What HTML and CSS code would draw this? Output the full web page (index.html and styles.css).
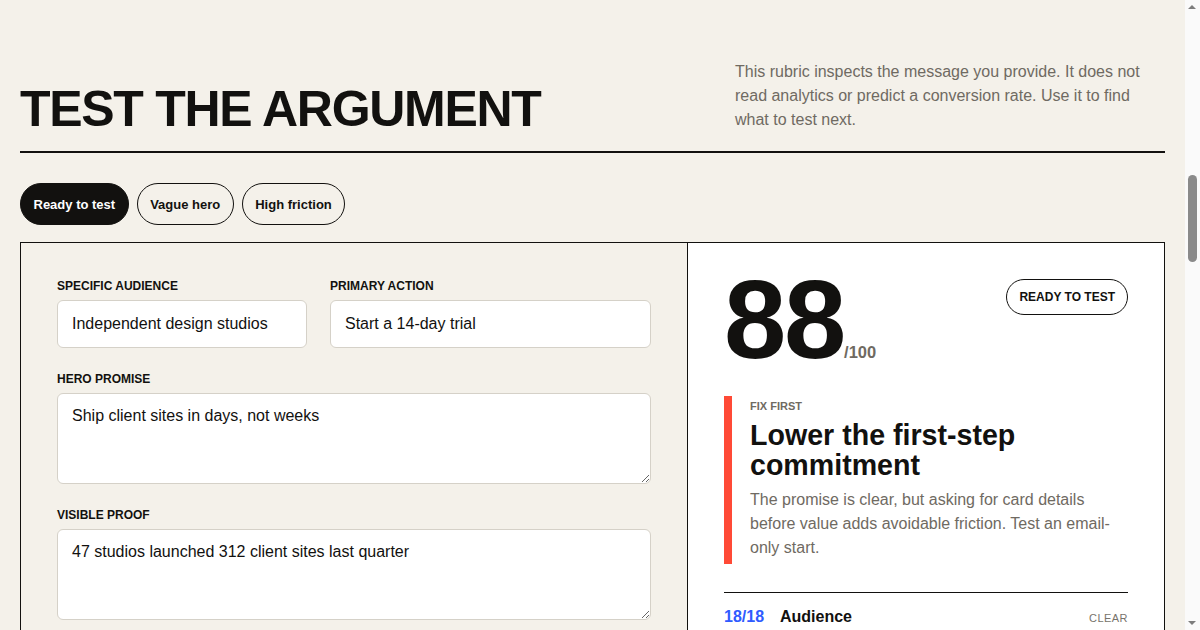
FILE: index.html
```html
<!DOCTYPE html>
<html lang="en">
<head>
    <meta charset="UTF-8">
    <meta name="viewport" content="width=device-width, initial-scale=1.0">
    <title>Test the argument</title>
    <link rel="stylesheet" href="styles.css">
</head>
<body>
    <div class="page">
        <header class="intro">
            <h1>TEST THE ARGUMENT</h1>
            <p>This rubric inspects the message you provide. It does not read analytics or predict a conversion rate. Use it to find what to test next.</p>
        </header>

        <div class="presets">
            <button type="button" class="preset active">Ready to test</button>
            <button type="button" class="preset">Vague hero</button>
            <button type="button" class="preset">High friction</button>
        </div>

        <section class="tester">
            <form class="inputs">
                <div class="row-2">
                    <div class="field">
                        <label for="audience">Specific audience</label>
                        <input type="text" id="audience" value="Independent design studios">
                    </div>
                    <div class="field">
                        <label for="action">Primary action</label>
                        <input type="text" id="action" value="Start a 14-day trial">
                    </div>
                </div>
                <div class="field">
                    <label for="promise">Hero promise</label>
                    <textarea id="promise">Ship client sites in days, not weeks</textarea>
                </div>
                <div class="field">
                    <label for="proof">Visible proof</label>
                    <textarea id="proof">47 studios launched 312 client sites last quarter</textarea>
                </div>
                <div class="field">
                    <label for="friction">First step</label>
                    <textarea id="friction">Card details required before the trial starts</textarea>
                </div>
            </form>

            <div class="report">
                <div class="score-row">
                    <div class="score">88<span>/100</span></div>
                    <div class="verdict">Ready to test</div>
                </div>

                <div class="fix">
                    <div class="fix-label">Fix first</div>
                    <h2>Lower the first-step commitment</h2>
                    <p>The promise is clear, but asking for card details before value adds avoidable friction. Test an email-only start.</p>
                </div>

                <ul class="checks">
                    <li><span class="pts">18/18</span><span class="name">Audience</span><span class="state">Clear</span></li>
                    <li><span class="pts">20/22</span><span class="name">Promise</span><span class="state">Clear</span></li>
                    <li><span class="pts">18/20</span><span class="name">Proof</span><span class="state">Clear</span></li>
                    <li><span class="pts">17/18</span><span class="name">Action</span><span class="state">Clear</span></li>
                    <li><span class="pts">15/22</span><span class="name">Friction</span><span class="state">Weak</span></li>
                </ul>
            </div>
        </section>
    </div>

    <!-- classic scrollbar gutter, drawn by hand -->
    <div class="gutter" aria-hidden="true">
        <span class="arrow up"></span>
        <span class="thumb"></span>
        <span class="arrow down"></span>
    </div>
</body>
</html>
```

FILE: styles.css
```css
body {
    margin: 0 15px 0 0;
    background: #f4f1ea;
    color: #12110f;
    font-family: "Liberation Sans", Arial, sans-serif;
}
.page {
    padding: 0 20px 80px;
}
.intro {
    display: grid;
    grid-template-columns: 1fr 430px;
    align-items: end;
    padding: 60px 0 17px;
    border-bottom: 2px solid #12110f;
}
.intro h1 {
    margin: 0;
    font-size: 50px;
    line-height: 1;
    letter-spacing: -0.026em;
}
.intro p {
    margin: 0 0 2px;
    font-size: 16px;
    line-height: 24px;
    color: #6f6a62;
}
.presets {
    display: flex;
    gap: 8px;
    margin: 30px 0 17px;
}
.preset {
    height: 42px;
    padding: 0 12.5px;
    border: 1px solid #12110f;
    border-radius: 21px;
    background: transparent;
    color: #12110f;
    font-family: inherit;
    font-size: 13px;
    font-weight: bold;
    cursor: pointer;
}
.preset.active {
    background: #12110f;
    color: #fff;
}
.tester {
    display: grid;
    grid-template-columns: 667px 1fr;
    border: 1px solid #12110f;
}
.inputs {
    display: flex;
    flex-direction: column;
    gap: 24px;
    padding: 36px;
    border-right: 1px solid #12110f;
}
.row-2 {
    display: grid;
    grid-template-columns: 250px 1fr;
    gap: 23px;
}
.field label {
    display: block;
    margin-bottom: 7px;
    font-size: 12px;
    line-height: 14px;
    font-weight: bold;
    text-transform: uppercase;
}
.field input,
.field textarea {
    display: block;
    width: 100%;
    box-sizing: border-box;
    padding: 14px;
    border: 1px solid #d5d1c8;
    border-radius: 6px;
    background: #fff;
    color: #12110f;
    font-family: inherit;
    font-size: 16px;
}
.field input {
    height: 48px;
}
.field textarea {
    height: 91px;
    padding-top: 13px;
    resize: vertical;
}
.report {
    background: #fff;
    padding: 36px;
}
.score-row {
    display: flex;
    justify-content: space-between;
    align-items: flex-start;
}
.score {
    font-size: 112px;
    font-weight: bold;
    line-height: 0.78;
    letter-spacing: -0.02em;
    margin-top: -3px;
}
.score span {
    font-size: 16.5px;
    letter-spacing: 0;
    color: #6f6a62;
}
.verdict {
    padding: 0 12px;
    height: 34px;
    line-height: 34px;
    border: 1px solid #12110f;
    border-radius: 18px;
    font-size: 12px;
    font-weight: bold;
    text-transform: uppercase;
}
.fix {
    margin-top: 33px;
    padding: 4px 0 4px 18px;
    border-left: 8px solid #ff4a36;
}
.fix-label {
    font-size: 11px;
    font-weight: bold;
    text-transform: uppercase;
    color: #6f6a62;
}
.fix h2 {
    margin: 8px 0 8px;
    font-size: 28.6px;
    line-height: 30px;
}
.fix p {
    margin: 0;
    font-size: 16px;
    line-height: 24px;
    color: #6f6a62;
}
.checks {
    list-style: none;
    margin: 28px 0 0;
    padding: 0;
    border-top: 1px solid #12110f;
}
.checks li {
    display: flex;
    align-items: baseline;
    padding: 15px 0;
    border-bottom: 1px solid #e4e0d7;
    font-size: 16px;
}
.checks .pts {
    width: 56px;
    font-weight: bold;
    color: #2f5bff;
}
.checks .name {
    flex: 1;
    font-weight: bold;
}
.checks .state {
    font-size: 11px;
    letter-spacing: 0.04em;
    text-transform: uppercase;
    color: #77736b;
}

/* scrollbar gutter on the right edge */
.gutter {
    position: fixed;
    top: 0;
    right: 0;
    bottom: 0;
    width: 15px;
    background: #fafafa;
}
.gutter .arrow {
    position: absolute;
    left: 3px;
    width: 0;
    height: 0;
    border-left: 4.5px solid transparent;
    border-right: 4.5px solid transparent;
}
.gutter .up {
    top: 5px;
    border-bottom: 4px solid #7d7d7d;
}
.gutter .down {
    bottom: 5px;
    border-top: 4px solid #7d7d7d;
}
.gutter .thumb {
    position: absolute;
    top: 175px;
    left: 3px;
    width: 9px;
    height: 87px;
    border-radius: 5px;
    background: #8a8a8a;
}
```
